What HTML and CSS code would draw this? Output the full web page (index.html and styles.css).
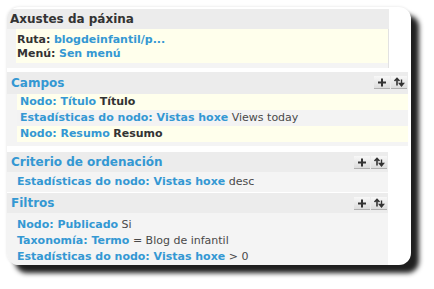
FILE: index.html
```html
<!DOCTYPE html>
<html>
<head>
<meta charset="utf-8">
<link rel="stylesheet" href="styles.css">
</head>
<body>
<div class="card">
  <section class="sec sec-settings">
    <div class="hdr"><span class="title dark">Axustes da páxina</span></div>
    <div class="body">
      <div class="yellow-block">
        <div class="line"><b class="lbl">Ruta:</b> <b class="link">blogdeinfantil/p...</b></div>
        <div class="line"><b class="lbl">Menú:</b> <b class="link">Sen menú</b></div>
      </div>
    </div>
  </section>

  <section class="sec sec-wide">
    <div class="hdr">
      <span class="title">Campos</span>
      <div class="btns">
        <span class="btn"><svg width="16" height="12" viewBox="0 0 16 12"><path d="M4 6.5h8M8 2.5v8" stroke="#333" stroke-width="2"/></svg></span>
        <span class="btn"><svg width="16" height="12" viewBox="0 0 16 12"><path d="M6 2.5v7M3.5 5L6 2.5 8.5 5" stroke="#333" stroke-width="1.6" fill="none"/><path d="M10.5 3.5v6M8.5 7.5l2 2.5 2-2.5z" stroke="#333" stroke-width="1.4" fill="#333"/></svg></span>
      </div>
    </div>
    <div class="body rows">
      <div class="row odd"><b class="link">Nodo: Título</b> <b class="lbl">Título</b></div>
      <div class="row even"><b class="link">Estadísticas do nodo: Vistas hoxe</b> Views today</div>
      <div class="row odd"><b class="link">Nodo: Resumo</b> <b class="lbl">Resumo</b></div>
    </div>
  </section>

  <section class="sec sec-narrow sec-sort">
    <div class="hdr">
      <span class="title">Criterio de ordenación</span>
      <div class="btns">
        <span class="btn"><svg width="16" height="12" viewBox="0 0 16 12"><path d="M4 6.5h8M8 2.5v8" stroke="#333" stroke-width="2"/></svg></span>
        <span class="btn"><svg width="16" height="12" viewBox="0 0 16 12"><path d="M6 2.5v7M3.5 5L6 2.5 8.5 5" stroke="#333" stroke-width="1.6" fill="none"/><path d="M10.5 3.5v6M8.5 7.5l2 2.5 2-2.5z" stroke="#333" stroke-width="1.4" fill="#333"/></svg></span>
      </div>
    </div>
    <div class="body plain sort-body">
      <div class="row"><b class="link">Estadísticas do nodo: Vistas hoxe</b> desc</div>
    </div>
  </section>

  <section class="sec sec-narrow sec-filters">
    <div class="hdr">
      <span class="title">Filtros</span>
      <div class="btns">
        <span class="btn"><svg width="16" height="12" viewBox="0 0 16 12"><path d="M4 6.5h8M8 2.5v8" stroke="#333" stroke-width="2"/></svg></span>
        <span class="btn"><svg width="16" height="12" viewBox="0 0 16 12"><path d="M6 2.5v7M3.5 5L6 2.5 8.5 5" stroke="#333" stroke-width="1.6" fill="none"/><path d="M10.5 3.5v6M8.5 7.5l2 2.5 2-2.5z" stroke="#333" stroke-width="1.4" fill="#333"/></svg></span>
      </div>
    </div>
    <div class="body plain filters-body">
      <div class="row"><b class="link">Nodo: Publicado</b> Si</div>
      <div class="row"><b class="link">Taxonomía: Termo</b> = Blog de infantil</div>
      <div class="row"><b class="link">Estadísticas do nodo: Vistas hoxe</b> &gt; 0</div>
    </div>
  </section>
</div>
</body>
</html>
```

FILE: styles.css
```css
html, body {
  margin: 0;
  padding: 0;
  background: #fff;
}
body {
  width: 434px;
  height: 289px;
  overflow: hidden;
  font-family: "DejaVu Sans", Verdana, sans-serif;
  font-size: 11px;
  color: #494949;
}
.card {
  margin: 7px 0 0 7px;
  width: 404px;
  height: 258px;
  background: #fff;
  border-radius: 12px;
  overflow: hidden;
  box-shadow: 8px 8px 5px rgba(0, 0, 0, 0.88), 0 0 3px rgba(0, 0, 0, 0.12);
  display: flex;
  flex-direction: column;
  padding-top: 2px;
  box-sizing: border-box;
}
.sec {
  flex: none;
}
.sec-settings { width: 382px; }
.sec-wide { width: 401px; margin-top: 4px; }
.sec-narrow { width: 381px; }
.sec-sort { margin-top: 6px; }
.sec-filters { margin-top: 1px; flex: 1; display: flex; flex-direction: column; }

.hdr {
  background: #ececec;
  height: 20px;
  display: flex;
  justify-content: space-between;
  align-items: flex-start;
  padding-left: 4px;
}
.sec-settings .hdr { padding-left: 3px; }
.sec-wide .hdr { height: 22px; }
.title {
  font-weight: bold;
  font-size: 12px;
  line-height: 20px;
  color: #3498d3;
}
.sec-wide .title { line-height: 22px; }
.title.dark { color: #333; }

.btns {
  display: flex;
  gap: 1px;
  margin: 4px 1px 0 0;
}
.btn {
  display: block;
  width: 16px;
  height: 13px;
  background: linear-gradient(#f8f8f8, #dcdcdc);
  border-bottom: 1px solid #b0b0b0;
  box-sizing: border-box;
}
.btn svg { display: block; }

.body {
  background: #f4f4f4;
}
.sec-settings .body {
  padding: 0 0 5px 9px;
  border-right: 1px solid #e2e2e2;
}
.yellow-block {
  background: #ffffec;
  padding: 4px 0 2px 1px;
}
.line {
  line-height: 14px;
  height: 14px;
  white-space: nowrap;
}
.lbl { color: #333; }
.link { color: #3498d3; }

.rows {
  padding: 0 0 4px 10px;
}
.row {
  height: 16px;
  line-height: 16px;
  white-space: nowrap;
}
.rows .row { padding-left: 3px; }
.row.odd { background: #ffffec; }
.row.even { background: #f3f3f3; }

.plain {
  padding: 0 0 3px 10px;
}
.sort-body {
  padding-top: 2px;
  padding-bottom: 2px;
}
.filters-body {
  padding-top: 4px;
  flex: 1;
}
```
